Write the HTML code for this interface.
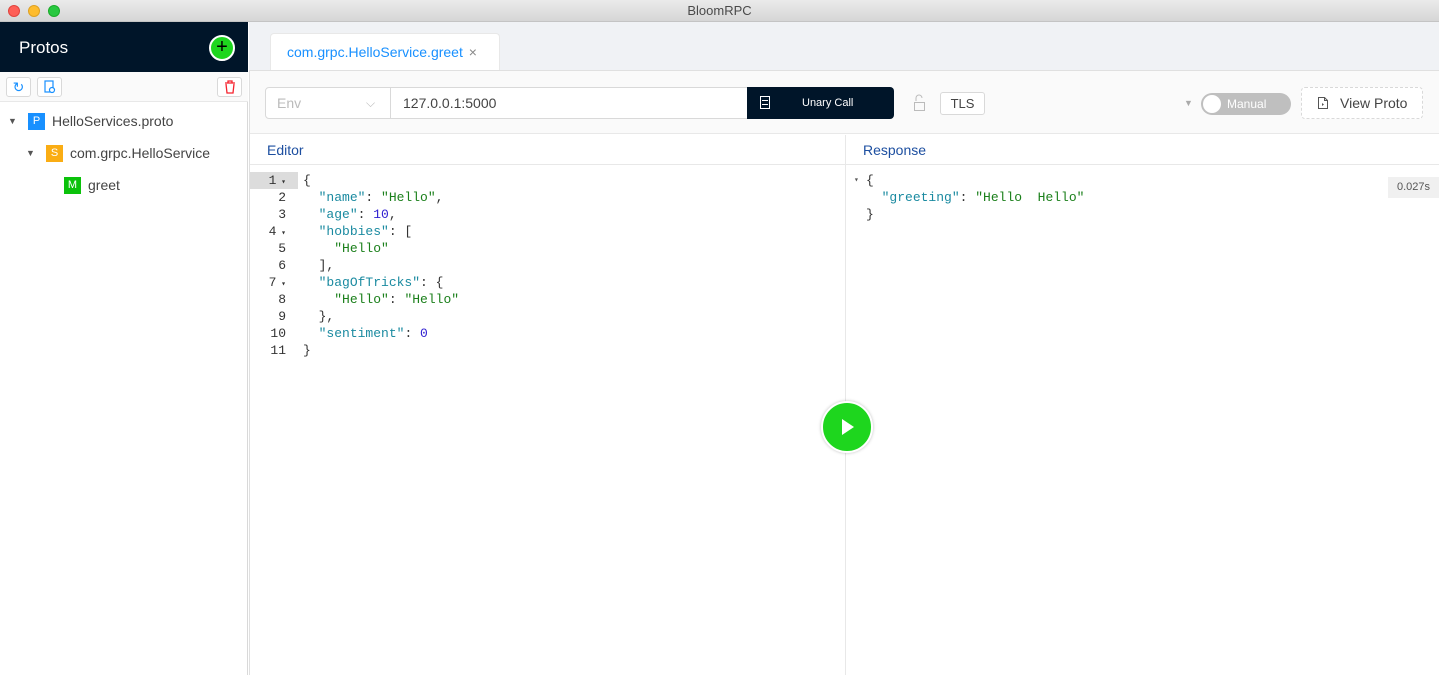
<!DOCTYPE html>
<html><head><meta charset="utf-8"><style>
*{box-sizing:border-box;margin:0;padding:0}
body{width:1439px;height:675px;overflow:hidden;font-family:"Liberation Sans",sans-serif;background:#fff;position:relative}
.abs{position:absolute}
.titlebar{left:0;top:0;width:1439px;height:22px;background:linear-gradient(#ebebeb,#d6d6d6);border-bottom:1px solid #c4c4c4;text-align:center;font-size:13px;line-height:22px;color:#4a4a4a}
.dot{top:5px;width:12px;height:12px;border-radius:50%}
.side{left:0;top:22px;width:248px;height:653px;background:#fff;border-right:1px solid #d9d9d9}
.sidehead{left:0;top:22px;width:248px;height:50px;background:#001529;color:#fff;font-size:17px;line-height:52px;padding-left:19px}
.btn{height:20px;border:1px solid #d9d9d9;border-radius:3px;background:#fff}
.mono{font-family:"Liberation Mono","DejaVu Sans Mono",monospace;font-size:13px}
.ln{position:absolute;left:250px;width:48px;text-align:right;padding-right:12px;color:#333;line-height:17px}
.code{position:absolute;left:303px;white-space:pre;color:#333}
.k{color:#1a8aa0}.s{color:#1a7f1a}.n{color:#3020d0}
</style></head><body>
<div class="abs titlebar">BloomRPC</div>
<div class="abs dot" style="left:8px;background:#fe5f57;border:1px solid #e0443e"></div>
<div class="abs dot" style="left:28px;background:#febc2e;border:1px solid #dea123"></div>
<div class="abs dot" style="left:48px;background:#28c840;border:1px solid #1aab29"></div>

<div class="abs side"></div>
<div class="abs sidehead">Protos</div>
<div class="abs" style="left:209px;top:35px;width:26px;height:26px;border-radius:50%;background:#1ed61e;border:2px solid #fff;color:#000;font-size:20px;line-height:21px;text-align:center">+</div>
<div class="abs" style="left:0;top:72px;width:248px;height:30px;background:#fafafa;border-bottom:1px solid #e8e8e8"></div>
<div class="abs btn" style="left:6px;top:77px;width:25px;color:#1890ff;font-size:14px;text-align:center;line-height:18px">↻</div>
<div class="abs btn" style="left:37px;top:77px;width:25px"><svg width="23" height="18"><rect x="7" y="3" width="8" height="11" fill="none" stroke="#1890ff" stroke-width="1.2"/><circle cx="14" cy="12" r="2.5" fill="#fff" stroke="#1890ff" stroke-width="1.2"/></svg></div>
<div class="abs btn" style="left:217px;top:77px;width:25px"><svg width="23" height="18"><path d="M7 5h10M10 5V3h4v2M8 6l1 9h6l1-9" fill="none" stroke="#f5222d" stroke-width="1.3"/></svg></div>

<div class="abs" style="left:8px;top:116px;font-size:9px;color:#555">▼</div>
<div class="abs" style="left:28px;top:113px;width:17px;height:17px;background:#1890ff;color:#fff;font-size:11px;text-align:center;line-height:17px">P</div>
<div class="abs" style="left:52px;top:113px;font-size:14px;color:#444">HelloServices.proto</div>
<div class="abs" style="left:26px;top:148px;font-size:9px;color:#555">▼</div>
<div class="abs" style="left:46px;top:145px;width:17px;height:17px;background:#faad14;color:#fff;font-size:11px;text-align:center;line-height:17px">S</div>
<div class="abs" style="left:70px;top:145px;font-size:14px;color:#444">com.grpc.HelloService</div>
<div class="abs" style="left:64px;top:177px;width:17px;height:17px;background:#0bc20b;color:#fff;font-size:11px;text-align:center;line-height:17px">M</div>
<div class="abs" style="left:88px;top:177px;font-size:14px;color:#444">greet</div>

<div class="abs" style="left:249px;top:22px;width:1190px;height:49px;background:#f0f2f5"></div>
<div class="abs" style="left:270px;top:33px;width:230px;height:38px;background:#fff;border:1px solid #e8e8e8;border-bottom:none;border-radius:4px 4px 0 0;color:#1890ff;font-size:14px;line-height:37px;padding-left:16px">com.grpc.HelloService.greet <span style="color:#888;margin-left:2px">×</span></div>
<div class="abs" style="left:249px;top:70px;width:1190px;height:605px;background:#fff;border-top:1px solid #e0e0e0;border-left:1px solid #e0e0e0"></div>
<div class="abs" style="left:250px;top:71px;width:1189px;height:63px;background:#fafafa;border-bottom:1px solid #e8e8e8"></div>
<div class="abs" style="left:265px;top:87px;width:126px;height:32px;border:1px solid #d9d9d9;border-radius:4px 0 0 4px;background:#fff;color:#bbb;font-size:14px;line-height:30px;padding-left:11px">Env<span class="abs" style="left:100px;top:0;color:#bbb;font-size:12px">⌵</span></div>
<div class="abs" style="left:390px;top:87px;width:358px;height:32px;border:1px solid #d9d9d9;background:#fff;color:#444;font-size:14px;line-height:30px;padding-left:12px">127.0.0.1:5000</div>
<div class="abs" style="left:747px;top:87px;width:147px;height:32px;background:#001529;border-radius:0 4px 4px 0;color:#fff;font-size:11px;line-height:32px;padding-left:55px">Unary Call</div>
<div class="abs" style="left:760px;top:96px;width:10px;height:13px;border:1px solid #fff"></div>
<div class="abs" style="left:762px;top:100px;width:6px;border-top:1px solid #fff"></div>
<div class="abs" style="left:762px;top:104px;width:6px;border-top:1px solid #fff"></div>
<svg class="abs" style="left:912px;top:93px" width="16" height="20"><path d="M4 8V5a3 3 0 0 1 6 0" fill="none" stroke="#bbb"/><rect x="2.5" y="9.5" width="10" height="8" fill="none" stroke="#bbb"/></svg>
<div class="abs" style="left:940px;top:92px;width:45px;height:23px;border:1px solid #d9d9d9;border-radius:3px;background:#fff;font-size:13px;text-align:center;line-height:21px;color:#444">TLS</div>
<div class="abs" style="left:1184px;top:98px;font-size:9px;color:#aaa">▼</div>
<div class="abs" style="left:1201px;top:93px;width:90px;height:22px;border-radius:11px;background:#bfbfbf;color:#fff;font-size:12px;line-height:22px;padding-left:26px">Manual</div>
<div class="abs" style="left:1203px;top:95px;width:18px;height:18px;border-radius:50%;background:#fff"></div>
<div class="abs" style="left:1301px;top:87px;width:122px;height:32px;border:1px dashed #d9d9d9;border-radius:4px;background:#fff;font-size:14px;line-height:30px;color:#444;padding-left:38px">View Proto</div>
<svg class="abs" style="left:1317px;top:96px" width="12" height="14"><path d="M1.5 1.5h6l3 3v8h-9z M7.5 1.5v3h3" fill="none" stroke="#555"/><path d="M5 7l2 1.5-2 1.5z" fill="#555"/></svg>

<div class="abs" style="left:250px;top:135px;width:1189px;height:30px;border-bottom:1px solid #e8e8e8"></div>
<div class="abs" style="left:845px;top:135px;width:1px;height:540px;background:#e8e8e8"></div>
<div class="abs" style="left:267px;top:142px;font-size:14px;color:#1d4fa0">Editor</div>
<div class="abs" style="left:863px;top:142px;font-size:14px;color:#1d4fa0">Response</div>

<div class="abs" style="left:250px;top:172px;width:48px;height:17px;background:#dcdcdc"></div>
<div class="mono">
<div class="ln" style="top:172px">1<span style="font-size:8px"> ▾</span></div>
<div class="ln" style="top:189px">2</div><div class="ln" style="top:206px">3</div>
<div class="ln" style="top:223px">4<span style="font-size:8px"> ▾</span></div>
<div class="ln" style="top:240px">5</div><div class="ln" style="top:257px">6</div>
<div class="ln" style="top:274px">7<span style="font-size:8px"> ▾</span></div>
<div class="ln" style="top:291px">8</div><div class="ln" style="top:308px">9</div><div class="ln" style="top:325px">10</div><div class="ln" style="top:342px">11</div>
<div class="code" style="top:172px;line-height:17px">{
  <span class="k">"name"</span>: <span class="s">"Hello"</span>,
  <span class="k">"age"</span>: <span class="n">10</span>,
  <span class="k">"hobbies"</span>: [
    <span class="s">"Hello"</span>
  ],
  <span class="k">"bagOfTricks"</span>: {
    <span class="s">"Hello"</span>: <span class="s">"Hello"</span>
  },
  <span class="k">"sentiment"</span>: <span class="n">0</span>
}</div>
<div class="abs" style="left:854px;top:175px;font-size:8px;color:#555">▾</div>
<div class="code" style="left:866px;top:172px;line-height:17px">{
  <span class="k">"greeting"</span>: <span class="s">"Hello  Hello"</span>
}</div>
</div>
<div class="abs" style="left:1388px;top:177px;width:51px;height:21px;background:#f0f0f0;color:#555;font-size:11px;line-height:21px;text-align:center">0.027s</div>

<div class="abs" style="left:821px;top:401px;width:52px;height:52px;border-radius:50%;background:#1ed61e;border:2px solid #fff;box-shadow:0 0 3px rgba(0,0,0,.25)"></div>
<svg class="abs" style="left:838px;top:416px" width="20" height="22"><path d="M4 3l12 8-12 8z" fill="#fff"/></svg>
</body></html>
